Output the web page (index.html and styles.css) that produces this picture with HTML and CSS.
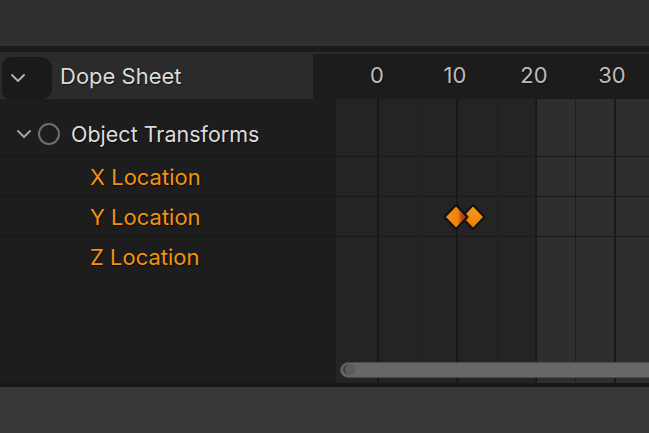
FILE: index.html
```html
<!DOCTYPE html>
<html>
<head>
<meta charset="utf-8">
<link rel="stylesheet" href="styles.css">
</head>
<body>
<div class="app">
  <div class="topbar"></div>
  <div class="sep"></div>
  <div class="editor">
    <div class="editor-head">
      <div class="ch-head">
        <div class="mode-btn">
          <svg width="16" height="10" viewBox="0 0 16 10"><path d="M2 2 L8 8 L14 2" fill="none" stroke="#b4b4b4" stroke-width="1.8" stroke-linecap="round" stroke-linejoin="round"/></svg>
        </div>
        <span class="title">Dope Sheet</span>
      </div>
      <div class="tl-head">
        <span class="num n0">0</span>
        <span class="num n10">10</span>
        <span class="num n20">20</span>
        <span class="num n30">30</span>
      </div>
    </div>
    <div class="editor-body">
      <div class="ch-list">
        <div class="row group">
          <svg class="chev" width="16" height="10" viewBox="0 0 16 10"><path d="M2 2 L8 8 L14 2" fill="none" stroke="#a8a8a8" stroke-width="1.8" stroke-linecap="round" stroke-linejoin="round"/></svg>
          <span class="circle"></span>
          <span class="group-name">Object Transforms</span>
        </div>
        <div class="row chan">X Location</div>
        <div class="row chan">Y Location</div>
        <div class="row chan">Z Location</div>
      </div>
      <div class="tl-body">
        <div class="vline major l0"></div>
        <div class="vline minor l5"></div>
        <div class="vline major l10"></div>
        <div class="vline minor l15"></div>
        <div class="vline major l20"></div>
        <div class="vline minor l25"></div>
        <div class="vline major l30"></div>
        <div class="tl-rows">
          <div class="trow group-row"></div>
          <div class="trow"></div>
          <div class="trow"></div>
          <div class="trow last"></div>
        </div>
        <svg class="keys" width="48" height="32" viewBox="0 0 48 32">
          <defs>
            <linearGradient id="kg" x1="0" y1="0" x2="0" y2="1">
              <stop offset="0" stop-color="#fa9c1e"/>
              <stop offset="1" stop-color="#ea7c04"/>
            </linearGradient>
            <linearGradient id="kg2" x1="0" y1="0" x2="1" y2="0">
              <stop offset="0" stop-color="#f7931a"/>
              <stop offset="0.58" stop-color="#ee8308"/>
              <stop offset="0.74" stop-color="#b9481a"/>
              <stop offset="1" stop-color="#8a2a14"/>
            </linearGradient>
          </defs>
          <polygon points="31,4 42.5,16 31,28 19.5,16" fill="url(#kg)" stroke="#121212" stroke-width="2.2" stroke-linejoin="round"/>
          <polygon points="14,4 25.5,16 14,28 2.5,16" fill="url(#kg2)" stroke="#121212" stroke-width="2.2" stroke-linejoin="round"/>
        </svg>
        <div class="scrollbar"></div>
      </div>
    </div>
  </div>
  <div class="bottom-sep"></div>
  <div class="bottombar"></div>
</div>
</body>
</html>
```

FILE: styles.css
```css
html, body {
  margin: 0;
  padding: 0;
  background: #303030;
}
.app {
  width: 649px;
  height: 433px;
  overflow: hidden;
  display: flex;
  flex-direction: column;
  font-family: Inter, "DejaVu Sans", sans-serif;
}
.topbar {
  height: 46px;
  background: #303030;
}
.sep {
  height: 6px;
  background: #1b1b1b;
}
.editor {
  height: 331px;
  display: flex;
  flex-direction: column;
}
.editor-head {
  height: 47px;
  display: flex;
}
.ch-head {
  width: 313px;
  background: #2b2b2b;
  display: flex;
  align-items: center;
  padding-left: 2px;
  box-sizing: border-box;
}
.mode-btn {
  width: 50px;
  height: 42px;
  margin-top: 4px;
  background: #1a1a1a;
  border-radius: 9px 12px 10px 8px;
  display: flex;
  align-items: center;
  justify-content: flex-start;
  padding-left: 8px;
  box-sizing: border-box;
}
.title {
  margin-left: 8px;
  font-size: 22px;
  color: #dadada;
  text-shadow: 1px 1px 1px rgba(0,0,0,0.6);
}
.tl-head {
  flex: 1;
  position: relative;
  background: #1c1c1c;
  border-top: 2px solid #2b2b2b;
}
.num {
  position: absolute;
  top: 8px;
  font-size: 22px;
  color: #bcbcbc;
  transform: translateX(-50%);
  text-shadow: 1px 1px 1px rgba(0,0,0,0.5);
}
.n0 { left: 64px; }
.n10 { left: 142px; }
.n20 { left: 221px; }
.n30 { left: 299px; }

.editor-body {
  flex: 1;
  display: flex;
}
.ch-list {
  width: 336px;
  background: #1d1d1d;
  padding-top: 18px;
  box-sizing: border-box;
}
.row {
  height: 40px;
  border-bottom: 1px solid #161616;
  box-sizing: border-box;
  display: flex;
  align-items: center;
}
.group {
  padding-left: 16px;
  padding-bottom: 6px;
  border-bottom: 1px solid #161616;
}
.chev {
  flex: none;
}
.circle {
  width: 18px;
  height: 18px;
  border: 2px solid #6e6e6e;
  border-radius: 50%;
  margin-left: 6px;
  flex: none;
}
.group-name {
  margin-left: 11px;
  font-size: 21.5px;
  color: #dcdcdc;
  text-shadow: 1px 1px 1px rgba(0,0,0,0.6);
}
.chan {
  padding-left: 90px;
  font-size: 22px;
  color: #f39211;
  text-shadow: 1px 1px 1px rgba(0,0,0,0.6);
}
.row:last-child {
  border-bottom: none;
}

.tl-body {
  flex: 1;
  position: relative;
  background: linear-gradient(to right, #242424 200px, #2e2e2e 200px);
  padding-top: 18px;
  box-sizing: border-box;
  overflow: hidden;
}
.vline {
  position: absolute;
  top: 0;
  bottom: 0;
}
.major {
  width: 2px;
  background: #191919;
}
.minor {
  width: 1px;
  background: #1f1f1f;
}
.l0 { left: 41px; }
.l5 { left: 82px; }
.l10 { left: 120px; }
.l15 { left: 161px; }
.l20 { left: 199px; }
.l25 { left: 239px; }
.l30 { left: 278px; }
.tl-rows {
  position: relative;
}
.trow {
  height: 40px;
  border-bottom: 1px solid #1a1a1a;
  box-sizing: border-box;
}
.trow.last {
  border-bottom: none;
}
.keys {
  position: absolute;
  left: 106px;
  top: 102px;
}
.scrollbar {
  position: absolute;
  left: 4px;
  right: -10px;
  bottom: 5px;
  height: 16px;
  background: #676767;
  border: 1px solid #4c4c4c;
  border-radius: 8px;
  box-sizing: border-box;
}
.scrollbar::before {
  content: "";
  position: absolute;
  left: 2px;
  top: 1px;
  width: 11px;
  height: 11px;
  border-radius: 50%;
  border-left: 2px solid #3c3c3c;
  background: #5c5c5c;
}
.bottom-sep {
  height: 4px;
  background: #181818;
}
.bottombar {
  flex: 1;
  background: #373737;
}
```
